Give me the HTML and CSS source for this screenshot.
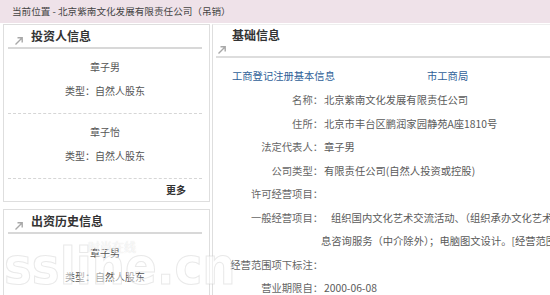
FILE: index.html
```html
<!DOCTYPE html>
<html lang="zh-CN">
<head>
    <meta charset="UTF-8">
    <meta name="viewport" content="width=device-width, initial-scale=1.0">
    <title>北京紫南文化发展有限责任公司</title>
    <link rel="stylesheet" href="styles.css">
</head>
<body>
    <div class="topbar">当前位置 - 北京紫南文化发展有限责任公司（吊销）</div>

    <div class="main">
        <div class="side">
            <div class="box">
                <div class="box-head">
                    <svg class="arrow" width="10" height="10" viewBox="0 0 10 10"><path d="M1.5 8.5 L8 2 M3.5 1.8 H8.2 V6.5" /></svg>
                    <span class="box-title">投资人信息</span>
                </div>
                <div class="person">
                    <div>章子男</div>
                    <div>类型：自然人股东</div>
                </div>
                <div class="person">
                    <div>章子怡</div>
                    <div>类型：自然人股东</div>
                </div>
                <div class="more">更多</div>
            </div>

            <div class="box box-history">
                <div class="box-head">
                    <svg class="arrow" width="10" height="10" viewBox="0 0 10 10"><path d="M1.5 8.5 L8 2 M3.5 1.8 H8.2 V6.5" /></svg>
                    <span class="box-title">出资历史信息</span>
                </div>
                <div class="person no-line">
                    <div>章子男</div>
                    <div>类型：自然人股东</div>
                </div>
            </div>
        </div>

        <div class="content">
            <div class="content-head">
                <div class="content-title">基础信息</div>
                <svg class="arrow" width="10" height="10" viewBox="0 0 10 10"><path d="M1.5 8.5 L8 2 M3.5 1.8 H8.2 V6.5" /></svg>
            </div>
            <div class="links">
                <a href="#">工商登记注册基本信息</a>
                <a href="#">市工商局</a>
            </div>
            <div class="info-row"><span class="label">名称：</span><span class="value">北京紫南文化发展有限责任公司</span></div>
            <div class="info-row"><span class="label">住所：</span><span class="value">北京市丰台区鹏润家园静苑A座1810号</span></div>
            <div class="info-row"><span class="label">法定代表人：</span><span class="value">章子男</span></div>
            <div class="info-row"><span class="label">公司类型：</span><span class="value">有限责任公司(自然人投资或控股)</span></div>
            <div class="info-row"><span class="label">许可经营项目：</span><span class="value"></span></div>
            <div class="info-row"><span class="label">一般经营项目：</span><span class="value value-long">组织国内文化艺术交流活动、（组织承办文化艺术演出除外）；经济信<br>息咨询服务（中介除外）；电脑图文设计。[经营范围中属于法律、行政法规]</span></div>
            <div class="info-row"><span class="label">经营范围项下标注：</span><span class="value"></span></div>
            <div class="info-row"><span class="label">营业期限自：</span><span class="value">2000-06-08</span></div>
        </div>

        <div class="watermark">
            <span class="wm-small">时尚在线</span>
            <span class="wm-big">ssline.cn</span>
        </div>
    </div>
</body>
</html>
```

FILE: styles.css
```css
*{padding: 0;margin: 0;}
html,body{
    width: 100%;
    height: 100%;
}
body{
    overflow: hidden;
    background: #fff;
    font-family: "Noto Sans CJK SC", "Liberation Sans", sans-serif;
    color: #555;
}
.topbar{
    height: 23px;
    line-height: 23px;
    padding-left: 12px;
    background-color: #efe2e9;
    font-size: 9.6px;
    color: #444;
}
.main{
    display: flex;
    align-items: flex-start;
    padding: 1px 0 0 3px;
    position: relative;
}

/* 左侧栏 */
.side{
    width: 207px;
    flex-shrink: 0;
}
.box{
    border: solid 1px #dedede;
    font-size: 10px;
}
.box-history{
    margin-top: 7px;
    height: 120px;
}
.box-head{
    display: flex;
    align-items: center;
    height: 22px;
    margin: 0 7px 0 4px;
    padding-left: 6px;
    border-bottom: solid 2px #d8d8d8;
}
.box-head .arrow{
    margin-top: 9px;
}
.arrow path{
    fill: none;
    stroke: #a8a8a8;
    stroke-width: 1.4;
}
.box-title{
    margin-left: 7px;
    font-size: 12px;
    font-weight: 700;
    color: #333;
    line-height: 22px;
}
.person{
    margin: 0 7px 0 4px;
    padding: 6px 0 10px;
    line-height: 24px;
    text-align: center;
    border-bottom: dashed 1px #d6d6d6;
}
.person.no-line{
    border-bottom: none;
    padding-top: 7px;
}
.more{
    line-height: 22px;
    text-align: right;
    padding-right: 23px;
    font-weight: 700;
    color: #333;
}

/* 基础信息 */
.content{
    width: 420px;
    flex-shrink: 0;
    margin-left: 2px;
    height: 290px;
    border-left: solid 1px #dedede;
    border-top: solid 1px #eee;
    font-size: 10.3px;
}
.content-head{
    margin-left: 3px;
    padding: 0 0 1px 1px;
    border-bottom: solid 2px #dddddd;
}
.content-title{
    padding-left: 15px;
    line-height: 20px;
    font-size: 12px;
    font-weight: 700;
    color: #333;
}
.content-head .arrow{
    display: block;
}
.links{
    display: grid;
    grid-template-columns: 195px auto;
    padding: 6px 0 0 19px;
    line-height: 24px;
}
.links a{
    color: #2f5f98;
    text-decoration: none;
}
.info-row{
    display: flex;
    line-height: 23.5px;
}
.label{
    width: 110px;
    flex-shrink: 0;
    text-align: right;
    color: #666;
}
.value{
    padding-left: 1px;
    white-space: nowrap;
    color: #5a5a5a;
}
.value-long{
    margin-left: -3px;
    text-indent: 10px;
}

/* 水印 */
.watermark{
    position: absolute;
    left: 4px;
    top: 213px;
    width: 205px;
    pointer-events: none;
}
.wm-small{
    position: absolute;
    left: 84px;
    top: 2px;
    font-size: 12px;
    color: rgba(255,255,255,.8);
    text-shadow: 0 0 1px rgba(190,190,190,.6);
}
.wm-big{
    display: block;
    font-family: "DejaVu Sans Condensed", "DejaVu Sans", sans-serif;
    font-weight: 700;
    font-size: 52px;
    line-height: 60px;
    letter-spacing: 0;
    color: rgba(255,255,255,.5);
    -webkit-text-stroke: 1px rgba(200,200,200,.4);
}
```
